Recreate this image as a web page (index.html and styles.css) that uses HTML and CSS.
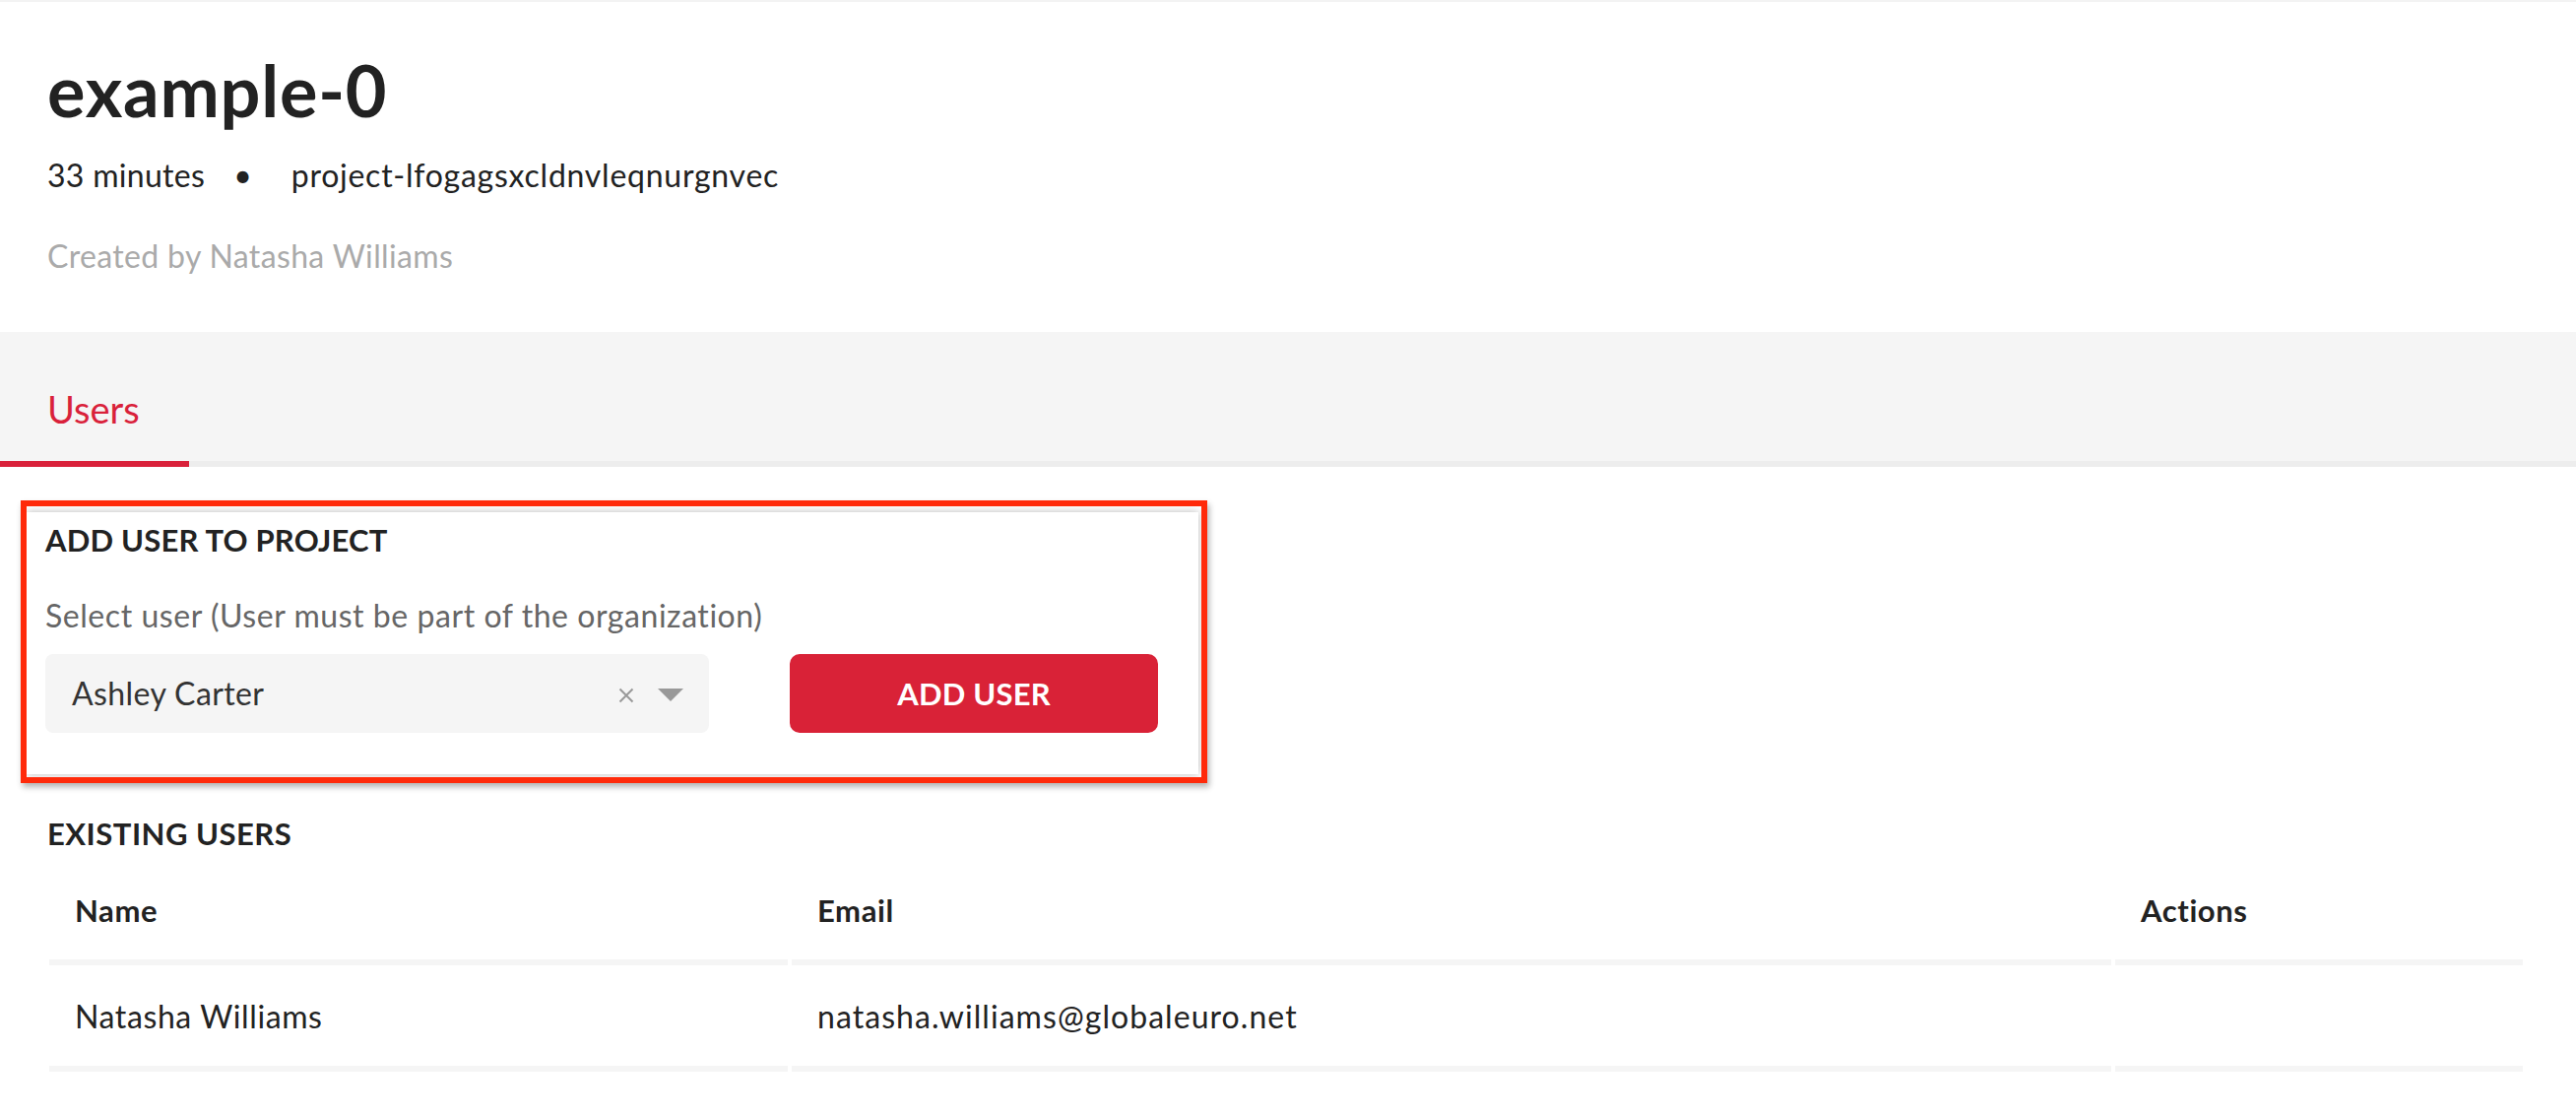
FILE: index.html
```html
<!DOCTYPE html>
<html lang="en">
<head>
<meta charset="utf-8">
<title>example-0</title>
<link rel="stylesheet" href="styles.css">
</head>
<body>
<div class="top-strip"></div>
<header class="project-header">
  <h1 class="title">example-0</h1>
  <div class="meta">
    <span class="meta-time">33 minutes</span>
    <span class="dot">•</span>
    <span class="meta-project">project-lfogagsxcldnvleqnurgnvec</span>
  </div>
  <div class="created">Created by Natasha Williams</div>
</header>
<nav class="tabs">
  <div class="tab active">Users</div>
</nav>
<main class="content">
  <section class="card">
    <div class="highlight"></div>
    <h2 class="section-title">ADD USER TO PROJECT</h2>
    <div class="field-label">Select user (User must be part of the organization)</div>
    <div class="add-row">
      <div class="select">
        <span class="select-value">Ashley Carter</span>
        <span class="select-icons">
          <svg class="clear-icon" width="16" height="16" viewBox="0 0 16 16"><path d="M1.5 1.5 L14.5 14.5 M14.5 1.5 L1.5 14.5" stroke="#999" stroke-width="2" fill="none"/></svg>
          <svg class="arrow-icon" width="26" height="13" viewBox="0 0 26 13"><polygon points="0,0 26,0 13,13" fill="#999"/></svg>
        </span>
      </div>
      <button class="btn-add">ADD USER</button>
    </div>
  </section>
  <section class="existing">
    <h2 class="section-title existing-title">EXISTING USERS</h2>
    <table class="users-table">
      <colgroup>
        <col class="col-name">
        <col class="col-email">
        <col class="col-actions">
      </colgroup>
      <thead>
        <tr><th>Name</th><th>Email</th><th>Actions</th></tr>
      </thead>
      <tbody>
        <tr><td>Natasha Williams</td><td>natasha.williams@globaleuro.net</td><td></td></tr>
      </tbody>
    </table>
  </section>
</main>
</body>
</html>
```

FILE: styles.css
```css
* { box-sizing: border-box; }
html, body { margin: 0; padding: 0; background: #fff; }
body {
  font-family: Lato, "Liberation Sans", sans-serif;
  color: #222;
  font-size: 32px;
  line-height: 40px;
  letter-spacing: 0.6px;
}
.top-strip { height: 2px; background: #f3f3f3; }

.project-header { padding: 49px 48px 57px; }
.title {
  margin: 0;
  font-size: 72px;
  line-height: 80px;
  font-weight: 700;
  letter-spacing: 0.8px;
  color: #222;
}
.meta { margin-top: 27px; display: flex; color: #222; }
.meta-time { letter-spacing: 0.3px; }
.meta .dot { margin: 0 40px 0 29px; letter-spacing: 0; }
.meta-project { letter-spacing: 0.75px; }
.created { margin-top: 42px; color: #aaa; letter-spacing: 0.35px; }

.tabs {
  display: flex;
  background: #f5f5f5;
  border-bottom: 6px solid #ededed;
}
.tab {
  padding: 54px 50px 29px 48px;
  font-size: 38px;
  line-height: 48px;
  letter-spacing: 0;
  margin-bottom: -6px;
}
.tab.active { color: #d9213a; border-bottom: 6px solid #d9213a; }

.content { padding: 46px 52px 0 48px; }

.card {
  position: relative;
  margin-left: -21px;
  width: 1190px;
  padding: 8px 19px 42px;
  background: #fff;
  box-shadow: 0 0 8px rgba(0,0,0,0.28);
}
.highlight {
  position: absolute;
  top: -12px; left: -6px; right: -9px; bottom: -9px;
  border: 6px solid #ff2a0a;
  box-shadow: 2px 4px 6px rgba(0,0,0,0.3);
  pointer-events: none;
}
.section-title {
  margin: 0;
  font-size: 31px;
  line-height: 40px;
  font-weight: 700;
  letter-spacing: 0.2px;
  color: #222;
}
.field-label { margin-top: 37px; color: #666; letter-spacing: 0.55px; }
.add-row { margin-top: 19px; display: flex; }
.select {
  width: 674px;
  height: 80px;
  background: #f5f5f5;
  border-radius: 8px;
  display: flex;
  align-items: center;
  justify-content: space-between;
  padding: 0 26px 0 27px;
  color: #333;
  letter-spacing: 0.4px;
}
.select-icons { display: flex; align-items: center; gap: 24px; }
.clear-icon { margin-top: 4px; }
.arrow-icon { margin-top: 2px; }
.btn-add {
  margin-left: 82px;
  width: 374px;
  height: 80px;
  border: none;
  border-radius: 10px;
  background: #d92237;
  color: #fff;
  font-family: inherit;
  font-size: 31px;
  font-weight: 700;
  letter-spacing: 0.2px;
  padding: 0;
}

.existing-title { margin-top: 40px; letter-spacing: 0.5px; }
.users-table {
  margin: 6px -2px 0;
  width: calc(100% + 4px);
  border-collapse: separate;
  border-spacing: 4px 0;
  table-layout: fixed;
}
.col-name { width: 750px; }
.col-email { width: 1340px; }
.users-table th, .users-table td {
  text-align: left;
  padding: 32px 26px 30px;
  border-bottom: 6px solid #f5f5f5;
  line-height: 40px;
  vertical-align: top;
}
.users-table th { font-weight: 700; font-size: 31px; letter-spacing: 0.6px; }
.users-table td { font-weight: 400; }
.users-table td:nth-child(2) { letter-spacing: 1.05px; }
```
